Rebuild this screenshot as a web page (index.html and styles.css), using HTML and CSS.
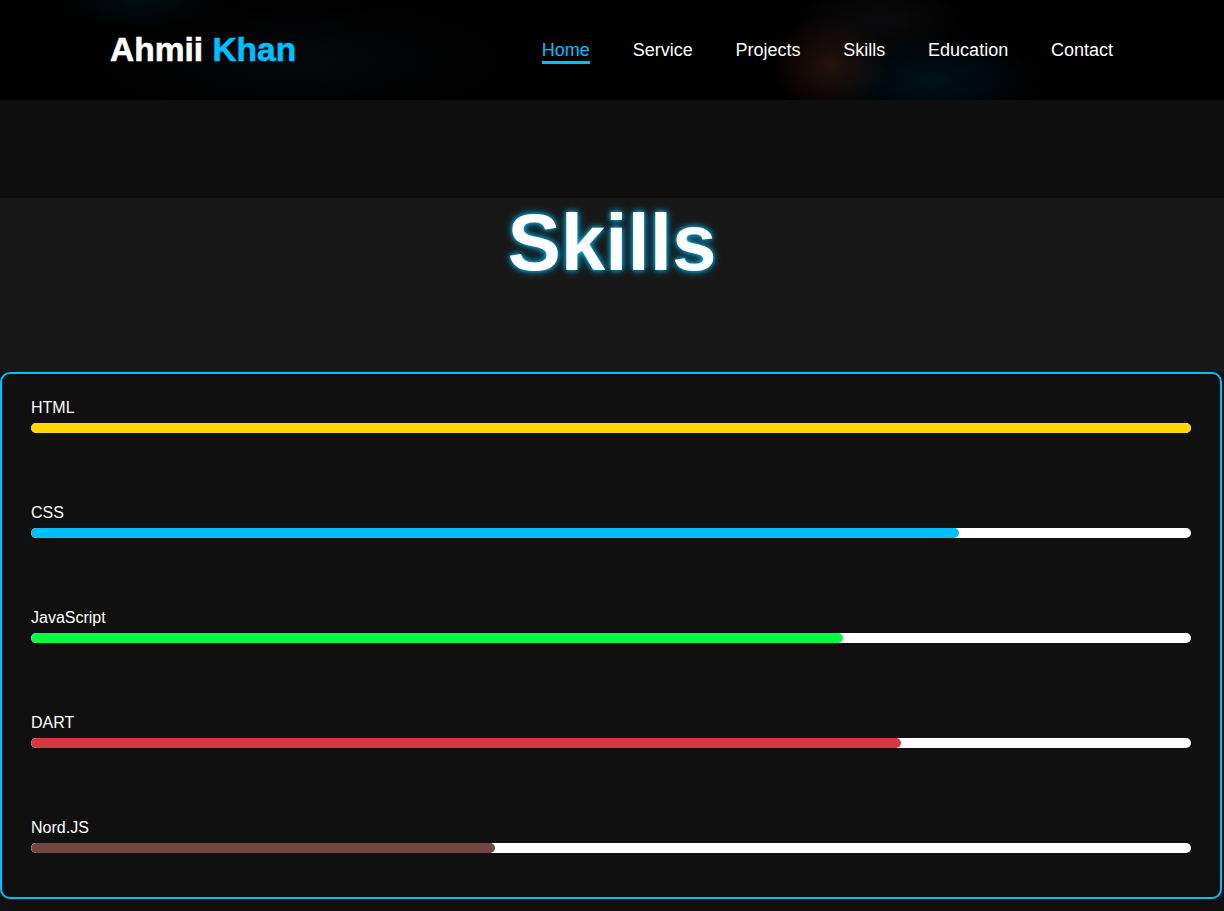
FILE: index.html
```html
<!DOCTYPE html>
<html lang="en">
<head>
<meta charset="utf-8">
<title>Ahmii Khan - Skills</title>
<link rel="stylesheet" href="styles.css">
</head>
<body>
<header class="header">
  <a class="logo" href="#">Ahmii <span class="logo-accent">Khan</span></a>
  <nav class="nav">
    <a class="nav-link active" href="#">Home</a>
    <a class="nav-link" href="#">Service</a>
    <a class="nav-link" href="#">Projects</a>
    <a class="nav-link" href="#">Skills</a>
    <a class="nav-link" href="#">Education</a>
    <a class="nav-link" href="#">Contact</a>
  </nav>
</header>
<div class="spacer"></div>
<section class="skills-head">
  <h1 class="skills-title">Skills</h1>
</section>
<section class="skills-box">
  <div class="skill">
    <div class="skill-name">HTML</div>
    <div class="track"><div class="fill fill-html" style="width:100%"></div></div>
  </div>
  <div class="skill">
    <div class="skill-name">CSS</div>
    <div class="track"><div class="fill fill-css" style="width:80%"></div></div>
  </div>
  <div class="skill">
    <div class="skill-name">JavaScript</div>
    <div class="track"><div class="fill fill-js" style="width:70%"></div></div>
  </div>
  <div class="skill">
    <div class="skill-name">DART</div>
    <div class="track"><div class="fill fill-dart" style="width:75%"></div></div>
  </div>
  <div class="skill">
    <div class="skill-name">Nord.JS</div>
    <div class="track"><div class="fill fill-node" style="width:40%"></div></div>
  </div>
</section>
</body>
</html>
```
FILE: styles.css
```css
* {
  box-sizing: border-box;
}

body {
  margin: 0;
  background: #101010;
  color: #fff;
  font-family: "Liberation Sans", Arial, sans-serif;
}

a {
  text-decoration: none;
}

.header {
  height: 100px;
  padding: 0 111px 0 110px;
  display: flex;
  align-items: center;
  justify-content: space-between;
  background-color: #000;
  background-image:
    radial-gradient(ellipse 60px 50px at 830px 65px, rgba(70, 35, 30, 0.5), transparent),
    radial-gradient(ellipse 110px 45px at 930px 80px, rgba(0, 45, 65, 0.4), transparent),
    radial-gradient(ellipse 90px 40px at 880px 20px, rgba(30, 30, 35, 0.4), transparent),
    radial-gradient(ellipse 80px 30px at 140px 0px, rgba(0, 50, 60, 0.3), transparent),
    radial-gradient(ellipse 200px 60px at 300px 60px, rgba(20, 25, 35, 0.3), transparent);
}

.logo {
  font-size: 33.5px;
  font-weight: 700;
  color: #fff;
  line-height: 38px;
  -webkit-text-stroke: 0.6px currentColor;
}

.logo-accent {
  color: #00bfff;
}

.nav {
  display: flex;
  gap: 42.8px;
}

.nav-link {
  position: relative;
  font-size: 18px;
  color: #fff;
  line-height: 21px;
}

.nav-link.active {
  color: #00bfff;
}

.nav-link.active::after {
  content: "";
  position: absolute;
  left: 0;
  right: 0;
  bottom: -3px;
  height: 3px;
  background: #00bfff;
}

.spacer {
  height: 98px;
  background: #0f0f0f;
}

.skills-head {
  height: 174px;
  background: #181818;
  padding-top: 5px;
  text-align: center;
}

.skills-title {
  margin: 0;
  font-size: 80px;
  line-height: 80px;
  font-weight: 700;
  color: #fff;
  text-shadow: 0 0 5px #00bfff, 0 0 10px rgba(0, 191, 255, 0.6);
}

.skills-box {
  margin-right: 2px;
  border: 2px solid #00bfff;
  border-radius: 10px;
  background: #101010;
  padding: 25px 29px 44px;
}

.skill {
  height: 105px;
}

.skill:last-child {
  height: auto;
}

.skill-name {
  font-size: 16px;
  line-height: 18px;
  color: #fff;
  margin-bottom: 6px;
}

.track {
  height: 10px;
  background: #fff;
  border-radius: 5px;
  overflow: hidden;
}

.fill {
  height: 100%;
  border-radius: 5px;
}

.fill-html { background: #ffd700; }
.fill-css { background: #00bfff; }
.fill-js { background: #00ff44; }
.fill-dart { background: #d9373f; }
.fill-node { background: #744545; }
```
